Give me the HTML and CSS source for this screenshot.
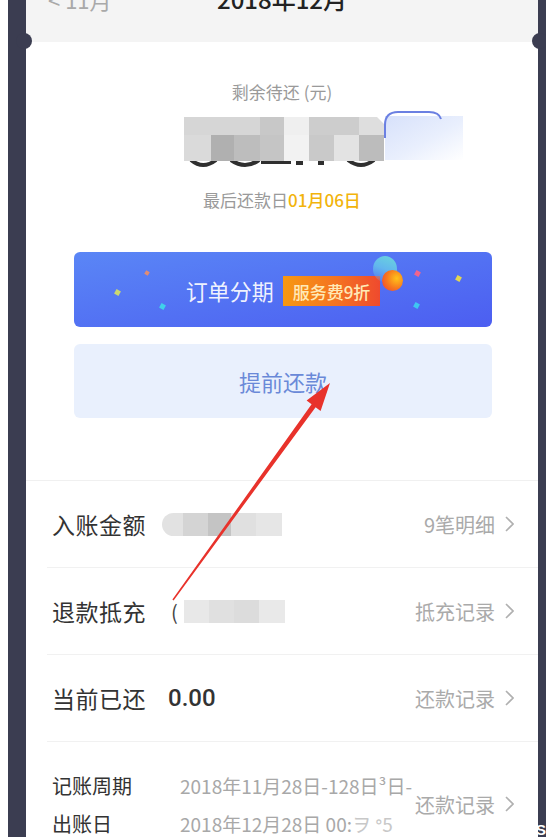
FILE: index.html
```html
<!DOCTYPE html>
<html lang="zh-CN">
<head>
<meta charset="utf-8">
<title>账单</title>
<link rel="stylesheet" href="styles.css">
</head>
<body>
<div class="screen">
  <div class="gutter"></div>
  <div class="strip strip-left"></div>
  <main class="card">
    <header class="month-bar">
      <div class="prev">&lt; 11月</div>
      <div class="title">2018年12月</div>
      <div></div>
    </header>
    <span class="notch notch-left"></span>
    <span class="notch notch-right"></span>

    <section class="summary">
      <div class="summary-label">剩余待还 (元)</div>
      <svg class="amount" width="360" height="60" viewBox="0 0 360 60">
        <defs>
          <linearGradient id="pillfill" x1="0" y1="0" x2="1" y2="1">
            <stop offset="0" stop-color="#d7e1fb"/>
            <stop offset="0.55" stop-color="#e9effd"/>
            <stop offset="1" stop-color="#ffffff"/>
          </linearGradient>
        </defs>
        <rect x="282" y="8" width="78" height="44" fill="url(#pillfill)"/>
        <path d="M282 30 L282 17 Q282 4 295 4 L326 4 Q336 4 338 11" fill="none" stroke="#6b80e2" stroke-width="2"/>
        <path d="M88 52 Q100 62 113 52" fill="none" stroke="#2f2f2f" stroke-width="4"/>
        <path d="M128 52 Q142 62 156 52" fill="none" stroke="#2f2f2f" stroke-width="4"/>
        <rect x="158" y="52" width="30" height="4" fill="#2f2f2f"/>
        <rect x="193" y="52" width="7" height="5" fill="#2f2f2f"/>
        <rect x="215" y="52" width="6" height="5" fill="#2f2f2f"/>
        <path d="M245 52 Q258 62 271 52" fill="none" stroke="#2f2f2f" stroke-width="4"/>
        <rect x="81" y="9" width="76" height="18" fill="#d6d6d6"/>
        <rect x="157" y="9" width="24" height="18" fill="#c8c8c8"/>
        <rect x="181" y="9" width="25" height="18" fill="#efefef"/>
        <rect x="206" y="9" width="50" height="18" fill="#cdcdcd"/>
        <path d="M256 9 L274 9 L281 16 L281 27 L256 27 Z" fill="#dedede"/>
        <rect x="81" y="27" width="27" height="26" fill="#dadada"/>
        <rect x="108" y="27" width="23" height="26" fill="#b0b0b0"/>
        <rect x="131" y="27" width="26" height="26" fill="#bdbdbd"/>
        <rect x="157" y="27" width="24" height="26" fill="#c5c5c5"/>
        <rect x="181" y="27" width="25" height="26" fill="#f2f2f2"/>
        <rect x="206" y="27" width="25" height="26" fill="#c9c9c9"/>
        <rect x="231" y="27" width="25" height="26" fill="#e3e3e3"/>
        <rect x="256" y="27" width="25" height="26" fill="#bcbcbc"/>
      </svg>
      <div class="due">最后还款日<span class="due-date">01月06日</span></div>

      <div class="actions">
        <button class="btn-install">
          <span class="confetti c1"></span>
          <span class="confetti c2"></span>
          <span class="confetti c3"></span>
          <span class="confetti c4"></span>
          <span class="confetti c5"></span>
          <span class="confetti c6"></span>
          <span class="ball-glow"></span>
          <span class="ball"></span>
          <span class="install-text">订单分期</span>
          <span class="badge">服务费9折</span>
        </button>
        <button class="btn-prepay">提前还款</button>
      </div>
    </section>

    <section class="details">
      <div class="row">
        <div class="label">入账金额</div>
        <div class="value">
          <span class="blur blur-round">
            <i style="width:21px;background:#e2e2e2"></i><i style="width:25px;background:#d4d4d4"></i><i style="width:23px;background:#c4c4c4"></i><i style="width:25px;background:#e0e0e0"></i><i style="width:26px;background:#e6e6e6"></i>
          </span>
        </div>
        <a class="link">9笔明细<svg class="chev" width="9" height="16" viewBox="0 0 9 16"><polyline points="1,1 8,8 1,15" fill="none" stroke="#b0b0b0" stroke-width="1.6"/></svg></a>
      </div>
      <div class="row">
        <div class="label">退款抵充</div>
        <div class="value">
          <span class="paren">(</span>
          <span class="blur">
            <i style="width:25px;background:#e8e8e8"></i><i style="width:25px;background:#e0e0e0"></i><i style="width:25px;background:#dcdcdc"></i><i style="width:26px;background:#e9e9e9"></i>
          </span>
        </div>
        <a class="link">抵充记录<svg class="chev" width="9" height="16" viewBox="0 0 9 16"><polyline points="1,1 8,8 1,15" fill="none" stroke="#b0b0b0" stroke-width="1.6"/></svg></a>
      </div>
      <div class="row">
        <div class="label">当前已还</div>
        <div class="value amount-paid">0.00</div>
        <a class="link">还款记录<svg class="chev" width="9" height="16" viewBox="0 0 9 16"><polyline points="1,1 8,8 1,15" fill="none" stroke="#b0b0b0" stroke-width="1.6"/></svg></a>
      </div>
      <div class="row row-period">
        <div class="period">
          <div class="pline"><span class="plabel">记账周期</span><span class="pval">2018年11月28日-128日³日-</span></div>
          <div class="pline"><span class="plabel">出账日</span><span class="pval">2018年12月28日 00:<span class="faint">ヲ ᐤ5</span></span></div>
        </div>
        <a class="link">还款记录<svg class="chev" width="9" height="16" viewBox="0 0 9 16"><polyline points="1,1 8,8 1,15" fill="none" stroke="#b0b0b0" stroke-width="1.6"/></svg></a>
      </div>
    </section>
  </main>
  <div class="strip strip-right"><span class="edge-glyph">S</span></div>

  <svg class="arrow" width="546" height="837" viewBox="0 0 546 837">
    <polygon points="173.6,600.4 315.6,407.2 320.6,411 330,383 306.6,400.4 311.6,404.2 172.4,599.6" fill="#e8322b"/>
  </svg>
</div>
</body>
</html>
```

FILE: styles.css
```css
* { box-sizing: border-box; }

html, body {
  margin: 0;
  padding: 0;
  background: #ffffff;
}

body {
  font-family: "Noto Sans CJK SC", "Noto Sans", sans-serif;
  color: #333333;
}

.screen {
  position: relative;
  display: flex;
  width: 546px;
  height: 837px;
  overflow: hidden;
}

.gutter {
  width: 8px;
  flex: none;
  background: #ffffff;
}

.strip {
  flex: none;
  background: #3b3d51;
}

.strip-left { width: 18px; }

.strip-right {
  width: 8px;
  display: flex;
  flex-direction: column;
  justify-content: flex-end;
  overflow: visible;
}

.edge-glyph {
  color: #ffffff;
  font: bold 15px "Liberation Sans", sans-serif;
  line-height: 18px;
  margin-left: -2px;
  margin-bottom: -2px;
}

.card {
  position: relative;
  width: 512px;
  flex: none;
  background: #ffffff;
}

/* month bar */
.month-bar {
  height: 42px;
  background: #f4f4f4;
  display: grid;
  grid-template-columns: 1fr auto 1fr;
  align-items: start;
  overflow: hidden;
}

.prev {
  margin-top: -13px;
  padding-left: 22px;
  font-size: 22px;
  line-height: 24px;
  color: #a9a9a9;
}

.title {
  margin-top: -13px;
  font-size: 24px;
  line-height: 24px;
  color: #222222;
  font-weight: 500;
}

.notch {
  position: absolute;
  top: 33px;
  width: 16px;
  height: 16px;
  border-radius: 50%;
  background: #3b3d51;
}

.notch-left { left: -10px; }
.notch-right { right: -10px; }

/* summary */
.summary {
  display: flex;
  flex-direction: column;
  align-items: center;
}

.summary-label {
  margin-top: 38px;
  font-size: 17px;
  line-height: 24px;
  color: #9a9a9a;
}

.amount {
  display: block;
  margin-top: 4px;
  margin-left: 2px;
}

.due {
  margin-top: 20px;
  font-size: 17px;
  line-height: 24px;
  color: #9a9a9a;
}

.due-date {
  color: #f2b40c;
  font-weight: 500;
}

.actions {
  align-self: stretch;
  margin: 40px 46px 0 48px;
  display: flex;
  flex-direction: column;
  gap: 17px;
}

button {
  font-family: inherit;
  border: none;
  padding: 0;
  cursor: pointer;
}

.btn-install {
  position: relative;
  height: 75px;
  border-radius: 6px;
  background: linear-gradient(170deg, #5a86f6 0%, #5270f3 55%, #4c5ef1 100%);
  display: flex;
  align-items: center;
  justify-content: center;
  gap: 9px;
  overflow: hidden;
}

.install-text {
  font-size: 22px;
  line-height: 30px;
  color: rgba(255, 255, 255, 0.92);
}

.badge {
  display: inline-flex;
  align-items: center;
  height: 30px;
  padding: 0 10px;
  margin-top: 3px;
  font-size: 17px;
  font-weight: 500;
  color: #ffe9b6;
  background: linear-gradient(90deg, #f79812 0%, #f47322 55%, #ef4a2e 100%);
}

.confetti {
  position: absolute;
  width: 5px;
  height: 5px;
  transform: rotate(30deg);
}

.c1 { left: 41px; top: 38px; background: #cbd870; }
.c2 { left: 71px; top: 19px; background: #e08c74; width: 4px; height: 4px; }
.c3 { left: 86px; top: 52px; background: #3fd2ea; }
.c4 { left: 341px; top: 19px; background: #f0648e; }
.c5 { left: 382px; top: 24px; background: #e2d652; }
.c6 { left: 340px; top: 51px; background: #3ec6f2; }

.ball-glow {
  position: absolute;
  left: 299px;
  top: 4px;
  width: 24px;
  height: 26px;
  border-radius: 50%;
  background: linear-gradient(200deg, #6ad6dc 0%, #62b6ee 50%, rgba(90, 130, 246, 0) 100%);
}

.ball {
  position: absolute;
  left: 308px;
  top: 18px;
  width: 21px;
  height: 21px;
  border-radius: 50%;
  background: radial-gradient(circle at 70% 40%, #ffc21a 0%, #f77a1e 50%, #ec3a3a 100%);
}

.btn-prepay {
  height: 74px;
  border-radius: 6px;
  background: #e9f0fd;
  font-size: 22px;
  color: #6a89d8;
}

/* details list */
.details {
  margin-top: 62px;
  border-top: 1px solid #f0f0f0;
}

.row {
  margin-left: 21px;
  height: 87px;
  padding: 0 24px 0 5px;
  display: flex;
  align-items: center;
  gap: 22px;
  border-bottom: 1px solid #f1f1f1;
}

.label {
  font-size: 23px;
  color: #333333;
  letter-spacing: 0.5px;
  flex: none;
}

.value {
  flex: 1;
  display: flex;
  align-items: center;
}

.blur {
  display: flex;
  height: 23px;
}

.blur i {
  display: block;
  height: 100%;
}

.blur-round {
  margin-left: -6px;
}

.blur-round i:first-child {
  border-radius: 12px 0 0 12px;
}

.paren {
  font-size: 20px;
  color: #444444;
  margin-left: 3px;
  margin-right: 6px;
}

.amount-paid {
  font-family: "Roboto", "Noto Sans", sans-serif;
  font-size: 24px;
  font-weight: 500;
  color: #333333;
}

.link {
  flex: none;
  display: flex;
  align-items: center;
  gap: 10px;
  font-size: 20px;
  color: #aaaaaa;
}

.chev { display: block; }

.row-period {
  border-bottom: none;
  height: auto;
  padding-top: 24px;
  align-items: center;
}

.period {
  flex: 1;
  min-width: 0;
}

.pline {
  display: flex;
  height: 38px;
  align-items: center;
  white-space: nowrap;
}

.plabel {
  width: 128px;
  flex: none;
  font-size: 20px;
  color: #333333;
}

.pval {
  font-size: 19px;
  color: #a8a8a8;
}

.faint { color: #c8c8c8; }

.arrow {
  position: absolute;
  left: 0;
  top: 0;
  pointer-events: none;
}
```
